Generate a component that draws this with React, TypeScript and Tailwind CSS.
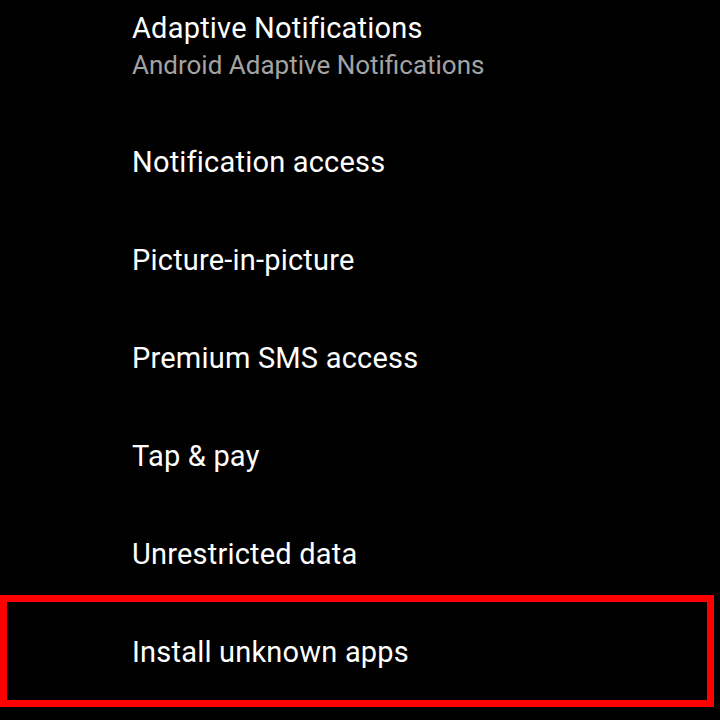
const items = [
  'Notification access',
  'Picture-in-picture',
  'Premium SMS access',
  'Tap & pay',
  'Unrestricted data',
];

function Row({ title }: { title: string }) {
  return (
    <div className="h-[98px] flex items-center pl-[132px] pt-[2px]">
      <span className="text-[29px] leading-[36px] tracking-[0.2px] text-white">{title}</span>
    </div>
  );
}

export default function App() {
  return (
    <div className="w-[720px] h-[720px] bg-black overflow-hidden font-['Roboto',sans-serif]">
      <div className="pl-[132px] pt-[10px] pb-[29px]">
        <div className="text-[29px] leading-[36px] tracking-[0.2px] text-white">Adaptive Notifications</div>
        <div className="text-[26px] leading-[36px] text-[#a3a3a3] pt-[1px]">Android Adaptive Notifications</div>
      </div>
      {items.map(t => (
        <Row key={t} title={t} />
      ))}
      <div className="ml-[7px] w-[700px] h-[98px] flex items-center pl-[125px] pt-[2px] outline-[7px] outline-solid outline-[#ff0000]">
        <span className="text-[29px] leading-[36px] tracking-[0.2px] text-white">Install unknown apps</span>
      </div>
    </div>
  );
}
